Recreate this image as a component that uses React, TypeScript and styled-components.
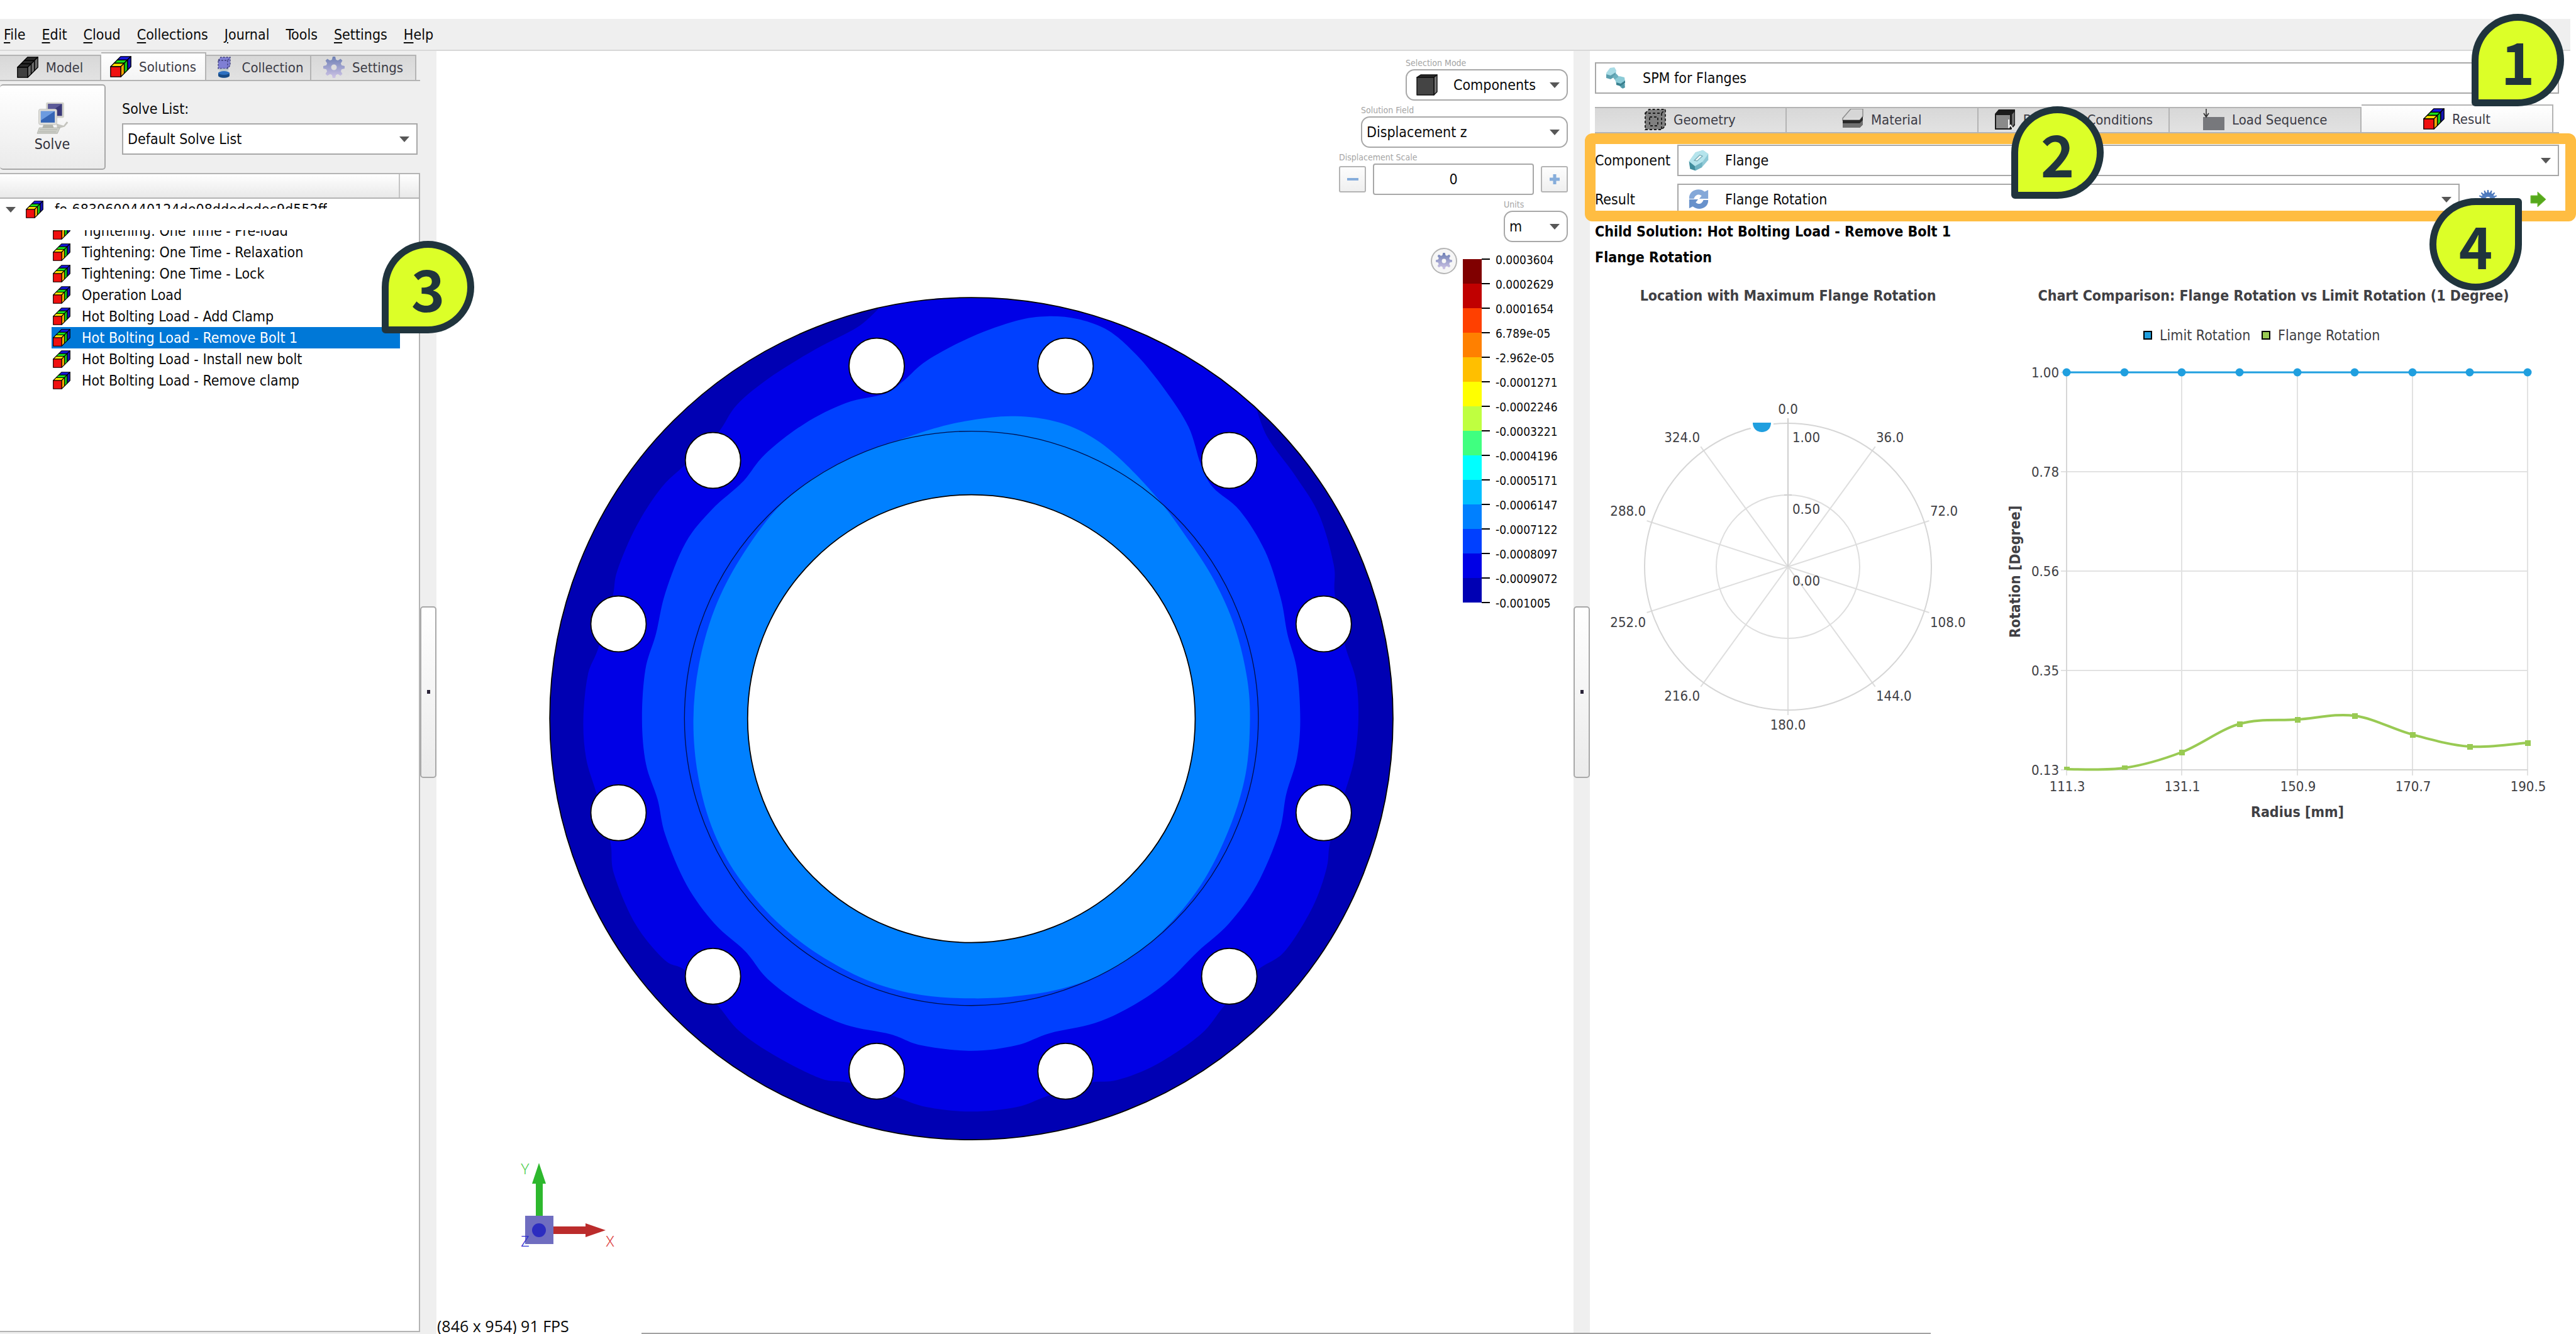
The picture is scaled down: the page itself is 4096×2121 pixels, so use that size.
import React from "react";
import type { ReactNode } from "react";
import styled, { createGlobalStyle, css } from "styled-components";

const uiFont = '"DejaVu Sans Condensed", "DejaVu Sans", "Noto Sans", sans-serif';
const line = "#a8a8a8";
const panel = "#efefef";

const GlobalStyle = createGlobalStyle`
  *, *::before, *::after { box-sizing: border-box; }
  body { margin: 0; background: #fff; }
  body, button, input, select { font-family: ${uiFont}; font-size: 23px; color: #0a0a0a; }
  h1, h2, ul, ol, p { margin: 0; padding: 0; font-size: inherit; }
  ul, ol { list-style: none; }
  svg { display: block; flex: none; }
`;

/* ---------- page frame ---------- */

const Page = styled.div`
  position: relative;
  display: flex;
  flex-direction: column;
  min-height: 100vh;
  padding-top: 30px;
  overflow: hidden;
`;

const MenuBar = styled.nav`
  display: flex;
  align-items: center;
  gap: 26px;
  height: 51px;
  margin-right: 9px;
  padding-left: 6px;
  background: ${panel};
  border-bottom: 2px solid #d8d8d8;
`;

const MenuItem = styled.button`
  padding: 0;
  border: 0;
  background: none;
  line-height: 30px;
  u { text-decoration-thickness: 2px; text-underline-offset: 4px; }
`;

const Workspace = styled.main`
  flex: 1;
  display: grid;
  grid-template-columns: 668px 26px minmax(0, 1808fr) 26px minmax(0, 1568fr);
`;

const Splitter = styled.div`
  display: flex;
  flex-direction: column;
  justify-content: center;
  padding-bottom: 2px;
  background: ${panel};
`;

const SplitHandle = styled.button`
  display: grid;
  place-items: center;
  height: 273px;
  padding: 0;
  border: 2px solid ${line};
  border-radius: 5px;
  background: linear-gradient(#fff, #ebebeb);
  &::after { content: ""; width: 5px; height: 6px; background: #2a2438; }
`;

/* ---------- shared controls ---------- */

const Tabs = styled.div<{ $inset: number }>`
  display: flex;
  align-items: flex-end;
  padding-right: ${(p) => p.$inset}px;
  border-bottom: 2px solid #b4b4b4;
`;

const Tab = styled.button<{ $active?: boolean; $basis?: number }>`
  flex: ${(p) => p.$basis ?? 1} 1 0;
  min-width: 0;
  display: flex;
  align-items: center;
  justify-content: center;
  gap: 12px;
  height: 40px;
  padding: 0 0 2px;
  border: 0 solid #b4b4b4;
  border-width: 2px 2px 0 0;
  background: linear-gradient(#d8d8d8, #e2e2e2);
  color: #3c3c46;
  font-size: 22px;
  white-space: nowrap;
  ${(p) => p.$active && css`
    height: 44px;
    padding: 0;
    background: linear-gradient(#fff, #f4f4f4);
  `}
`;

const SelectFrame = styled.span<{ $round?: boolean; $width?: number }>`
  display: flex;
  align-items: center;
  height: 50px;
  width: ${(p) => (p.$width ? `${p.$width}px` : "auto")};
  flex: ${(p) => (p.$width ? "none" : 1)};
  padding: 0 11px 0 7px;
  border: 2px solid ${line};
  border-radius: ${(p) => (p.$round ? 14 : 0)}px;
  background: #fff;
`;

const SelectIcon = styled.span`
  margin: 0 25px 0 8px;
`;

const NativeSelect = styled.select`
  flex: 1;
  min-width: 0;
  height: 100%;
  padding: 0;
  border: 0;
  background: none;
  appearance: none;
  outline: 0;
`;

const Caret = () => (
  <svg width="16" height="9" viewBox="0 0 16 9"><path d="M0 0H16L8 9Z" fill="#575757" /></svg>
);

function Select(props: { id: string; value: string; icon?: ReactNode; round?: boolean; width?: number }) {
  return (
    <SelectFrame $round={props.round} $width={props.width}>
      {props.icon && <SelectIcon>{props.icon}</SelectIcon>}
      <NativeSelect id={props.id} defaultValue={props.value}>
        <option>{props.value}</option>
      </NativeSelect>
      <Caret />
    </SelectFrame>
  );
}

/* ---------- icons ---------- */

type Seg = [number, number, string, string];

function BlockStack({ size = 34, front, segs }: { size?: number; front: string; segs: Seg[] }) {
  return (
    <svg width={size} height={size} viewBox="0 0 42 42" stroke="#000" strokeWidth="1.6" strokeLinejoin="round">
      {segs.map(([a, b, top, side]) => {
        const p = (x: number, y: number, t: number) => `${x + 20 * t},${y - 20 * t}`;
        return (
          <g key={a}>
            <polygon fill={top} points={[p(1, 21, a), p(21, 21, a), p(21, 21, b), p(1, 21, b)].join(" ")} />
            <polygon fill={side} points={[p(21, 21, a), p(21, 41, a), p(21, 41, b), p(21, 21, b)].join(" ")} />
          </g>
        );
      })}
      <rect x="1" y="21" width="20" height="20" fill={front} />
    </svg>
  );
}

const ResultIcon = ({ size }: { size?: number }) => (
  <BlockStack size={size} front="#f01010" segs={[
    [0.66, 1, "#1616e0", "#1414b8"],
    [0.34, 0.66, "#18e018", "#14c814"],
    [0, 0.34, "#ffe000", "#ffa800"],
  ]} />
);

const ModelIcon = () => (
  <BlockStack front="#404040" segs={[
    [0.66, 1, "#2a2a2a", "#6a6a6a"],
    [0.34, 0.66, "#2a2a2a", "#6a6a6a"],
    [0, 0.34, "#2a2a2a", "#6a6a6a"],
  ]} />
);

const CollectionIcon = () => (
  <svg width="34" height="34" viewBox="0 0 34 34">
    <path d="M8 6L12 1H27V14L23 19H8Z" fill="#7f7fd4" stroke="#3d3d78" strokeWidth="1.3" strokeDasharray="3 2" />
    <path d="M8 6H23V19M23 6L27 1" fill="none" stroke="#3d3d78" strokeWidth="1.3" strokeDasharray="3 2" />
    <ellipse cx="17" cy="21" rx="8" ry="2" fill="#b9c6c9" />
    <path d="M8 26V30C8 35 26 35 26 30V26Z" fill="#174a86" />
    <ellipse cx="17" cy="26" rx="9" ry="3" fill="#2c6fc0" />
  </svg>
);

type GearProps = { size?: number; from?: string; to?: string; teeth?: number; id: string };
function GearIcon({ size = 34, from = "#6d7fb4", to = "#cfc4e6", teeth = 8, id }: GearProps) {
  const half = 16 / teeth;
  return (
    <svg width={size} height={size} viewBox="0 0 34 34">
      <linearGradient id={id} gradientUnits="userSpaceOnUse" x1="0" y1="0" x2="0" y2="34">
        <stop offset="0" stopColor={from} /><stop offset="1" stopColor={to} />
      </linearGradient>
      <mask id={`${id}-teeth`}>
        {Array.from({ length: teeth }, (_, i) => (
          <path key={i} d={`M${17 - 2 * half} 8L${17 - half} 0H${17 + half}L${17 + 2 * half} 8Z`} fill="#fff" transform={`rotate(${(i * 360) / teeth} 17 17)`} />
        ))}
        <circle cx="17" cy="17" r="8.5" fill="none" stroke="#fff" strokeWidth="8" />
      </mask>
      <rect width="34" height="34" fill={`url(#${id})`} mask={`url(#${id}-teeth)`} />
    </svg>
  );
}

const SolveIcon = () => (
  <svg width="50" height="51" viewBox="0 0 60 62">
    <rect x="18" y="1" width="35" height="30" rx="3" fill="#d3d3cc" />
    <rect x="22" y="4" width="27" height="23" fill="#3a3878" />
    <path d="M22 4H49L22 22Z" fill="#5c5a98" />
    <path d="M38 42L52 46L58 38L61 40L54 48L40 52Z" fill="#c4c4be" />
    <rect x="4" y="14" width="35" height="30" rx="3" fill="#dededa" stroke="#bdbdb8" />
    <rect x="8" y="18" width="27" height="22" fill="#3565b5" />
    <path d="M8 18H35L8 36Z" fill="#6c9be0" />
    <path d="M13 44H31L33 50H11Z" fill="#b3b5ad" />
    <path d="M5 50H45L40 61H1Z" fill="#cfd1ca" stroke="#a9aba4" />
    <path d="M6 54H40M4 58H38" stroke="#b4b6ae" strokeWidth="1.5" />
  </svg>
);

const BoltIcon = () => (
  <svg width="34" height="34" viewBox="0 0 34 34">
    <path d="M1 9L7 1L14 0L17 5L16 13L8 18L1 16Z" fill="#a9dce6" />
    <path d="M1 11L8 13L16 8V14L8 19L1 17Z" fill="#5b9fae" />
    <path d="M11 15L17 10L31 27L29 33L25 33Z" fill="#6cb0be" />
    <path d="M15 19L22 14L30 16L31 23L24 28L17 26Z" fill="#8ccbd7" />
    <path d="M17 24L24 26L31 21V25L24 30L17 28Z" fill="#39808f" />
    <path d="M24 29L30 27L31 32L27 34Z" fill="#4f97a6" />
  </svg>
);

const NutIcon = () => (
  <svg width="34" height="34" viewBox="0 0 40 40">
    <path d="M2 22L14 5L28 1L38 8L38 19L26 33L14 39L4 36Z" fill="#8fc9d6" />
    <path d="M2 22L14 5L28 1L38 8L27 23L13 31Z" fill="#b5e4ec" />
    <path d="M2 22L13 31L14 39L4 36Z" fill="#3f8c9c" />
    <path d="M13 31L27 23L26 33L14 39Z" fill="#6fb3c2" />
    <path d="M12 20L22 10L27 12L17 21Z" fill="#f5fbfc" stroke="#74a9b4" strokeWidth="1.5" />
  </svg>
);

const RotationIcon = () => (
  <svg width="34" height="34" viewBox="0 0 36 36">
    <path d="M2 17C1 3 18 -3 28 5L34 2V17H19L23 12C18 8 12 10 10 17Z" fill="#84a8d8" />
    <path d="M34 19C35 33 18 38 8 30L2 33V18H17L13 23C18 28 24 25 26 19Z" fill="#6791cb" />
  </svg>
);

const CubeIcon = () => (
  <svg width="34" height="34" viewBox="0 0 34 34" stroke="#0c0c0c" strokeWidth="1.4" strokeLinejoin="round">
    <path d="M1 5L7 1H33L28 5Z" fill="#2b2b2b" />
    <path d="M28 5L33 1V28L28 33Z" fill="#777" />
    <path d="M1 5H28V33H1Z" fill="#444" />
  </svg>
);

const GeometryIcon = () => (
  <svg width="34" height="34" viewBox="0 0 34 34">
    <path d="M1 7L7 1H33V27L27 33H1Z" fill="#808080" />
    <path d="M1 7L7 1H33V27L27 33H1V7H27V33M27 7L33 1M8 13H21V27H8Z" fill="none" stroke="#1c1c1c" strokeWidth="1.8" strokeDasharray="4 3" />
  </svg>
);

const MaterialIcon = () => (
  <svg width="34" height="34" viewBox="0 0 34 34">
    <path d="M1 15L14 0H33L32 14Z" fill="#d6d6d6" />
    <path d="M1 15L14 0H33V12L28 18H1Z" fill="none" stroke="#8c8c8c" strokeWidth="1.5" />
    <path d="M1 18H28L33 12V25L28 30H1Z" fill="#2a2a2a" />
    <path d="M1 23H28L33 18V25L28 30H1Z" fill="#707070" />
  </svg>
);

const BoundaryIcon = () => (
  <svg width="34" height="34" viewBox="0 0 34 34">
    <path d="M1 8L7 1H33V26L27 33H1Z" fill="#1b1b1b" />
    <path d="M3 10H25V31H3Z" fill="#8a8a8a" />
    <path d="M28 9L32 5V24L28 29Z" fill="#6b6b6b" />
    <path d="M23 17V29L26 26L30 32" fill="none" stroke="#f2f2f2" strokeWidth="2" />
  </svg>
);

const LoadIcon = () => (
  <svg width="34" height="34" viewBox="0 0 34 34">
    <path d="M0 13H34V34H0Z" fill="#77787c" />
    <path d="M5 0V11M1 7L5 13L9 7" fill="none" stroke="#2e2e2e" strokeWidth="1.6" />
  </svg>
);

const GoIcon = () => (
  <svg width="26" height="26" viewBox="0 0 26 26">
    <path d="M1 7H12V1L25 13L12 25V19H1Z" fill="#55a81b" stroke="#7cc142" strokeWidth="1" />
  </svg>
);

const badgeCorners = {
  bl: "50% 50% 50% 6px",
  tr: "50% 6px 50% 50%",
};
const Badge = styled.span<{ $corner?: "bl" | "tr"; $top: number; $left?: number; $right?: number }>`
  position: absolute;
  z-index: 3;
  top: ${(p) => p.$top}px;
  ${(p) => (p.$left !== undefined ? `left: ${p.$left}px;` : `right: ${p.$right}px;`)}
  display: grid;
  place-items: center;
  width: 147px;
  height: 147px;
  border: 11px solid #20343d;
  border-radius: ${(p) => badgeCorners[p.$corner ?? "bl"]};
  background: #dcff28;
  color: #20343d;
  font: 700 91px/125px "Noto Sans CJK SC", "Noto Sans", sans-serif;
`;

/* ---------- left dock ---------- */

const LeftDock = styled.aside`
  position: relative;
  display: flex;
  flex-direction: column;
  padding: 2px 0 3px;
  background: ${panel};
`;

const SolveArea = styled.section`
  display: flex;
  gap: 26px;
  padding: 5px 4px 5px 0;
`;

const SolveButton = styled.button`
  display: flex;
  flex-direction: column;
  align-items: center;
  justify-content: center;
  gap: 2px;
  width: 168px;
  height: 136px;
  padding: 0;
  border: 2px solid ${line};
  border-left-width: 0;
  border-radius: 5px;
  background: linear-gradient(#fff, #ebebeb);
  color: #33333d;
  line-height: 28px;
`;

const SolveField = styled.div`
  flex: 1;
  display: flex;
  flex-direction: column;
  gap: 9px;
  padding-top: 25px;
  line-height: 28px;
  ${SelectFrame} { flex: none; }
`;

const TreeHeader = styled.div`
  height: 41px;
  padding-right: 30px;
  border: 2px solid #b4b4b4;
  border-left: 0;
  background: linear-gradient(#fff, #e9e9e9);
  &::after { content: ""; display: block; height: 100%; border-right: 2px solid #c4c4c4; }
`;

const Tree = styled.ul`
  flex: 1;
  padding-right: 30px;
  border: 0 solid #b4b4b4;
  border-width: 0 2px 2px 0;
  background: #fff;
  line-height: 34px;
  white-space: nowrap;
`;

const RootRow = styled.li`
  display: flex;
  align-items: center;
  height: 34px;
  padding-left: 9px;
`;

const RootIcon = styled.span`
  margin: 0 18px 0 16px;
`;

const RootLabel = styled.span`
  align-self: flex-start;
  height: 16px;
  overflow: hidden;
`;

const ChildRow = styled.li<{ $selected?: boolean; $cut?: boolean }>`
  display: flex;
  align-items: center;
  gap: 18px;
  height: 34px;
  margin-left: 82px;
  padding-left: 2px;
  ${(p) => p.$selected && css`background: #0078d7; color: #fff;`}
  ${(p) => p.$cut && css`
    height: 18px;
    margin-top: 16px;
    align-items: flex-end;
    overflow: hidden;
    svg { margin-bottom: 3px; }
  `}
`;

/* ---------- 3D view ---------- */

const View = styled.section`
  position: relative;
  display: flex;
  justify-content: flex-end;
  align-items: flex-start;
  background: #fff;
`;

const Scene = styled.svg`
  position: absolute;
  inset: 0;
  width: 100%;
  height: 100%;
`;

const FrameRate = styled.p`
  position: absolute;
  left: 1px;
  bottom: 0;
  font: 25px/26px "Open Sans", "Noto Sans", sans-serif;
`;

const ViewControls = styled.div`
  position: relative;
  display: flex;
  flex-direction: column;
  align-items: flex-end;
  gap: 5px;
  padding: 9px 9px 0 0;
`;

const ViewField = styled.div`
  display: flex;
  flex-direction: column;
  align-items: flex-start;
  & > label { color: #a4a4a4; font-size: 14px; line-height: 20px; }
`;

const Stepper = styled.div`
  display: flex;
  align-items: center;
  gap: 11px;
`;

const StepButton = styled.button`
  display: grid;
  place-items: center;
  width: 43px;
  height: 42px;
  padding: 0;
  border: 2px solid #b4b4b4;
  border-radius: 3px;
  background: linear-gradient(#fdfdfd, #efefef);
`;

const StepInput = styled.input`
  width: 256px;
  height: 50px;
  border: 2px solid ${line};
  border-radius: 4px;
  text-align: center;
`;

const Legend = styled.div`
  display: flex;
  align-items: flex-start;
  gap: 9px;
  padding-top: 4px;
`;

const RoundButton = styled.button`
  display: grid;
  place-items: center;
  width: 42px;
  height: 42px;
  padding: 0;
  border: 2px solid #b4b4b4;
  border-radius: 50%;
  background: #f6f6f6;
`;

const LegendBar = styled.svg`
  margin-top: 16px;
`;

const LegendLabels = styled.ol`
  width: 115px;
  font-size: 19px;
  line-height: 39px;
`;

const legendColors = ["#800000", "#c00000", "#ff4000", "#ff8000", "#ffbf00", "#ffff00", "#bfff40",
  "#40ff80", "#00ffff", "#00bfff", "#0080ff", "#0040ff", "#0000e6", "#0000b3"];
const legendValues = ["0.0003604", "0.0002629", "0.0001654", "6.789e-05", "-2.962e-05", "-0.0001271",
  "-0.0002246", "-0.0003221", "-0.0004196", "-0.0005171", "-0.0006147", "-0.0007122", "-0.0008097",
  "-0.0009072", "-0.001005"];

type Pt = [number, number];

/* Catmull-Rom spline through the points, as cubic Bézier segments. */
function spline(pts: Pt[], closed = false) {
  const n = pts.length;
  const at = (i: number) => (closed ? pts[(i + n) % n] : pts[Math.max(0, Math.min(n - 1, i))]);
  let d = `M${pts[0]}`;
  for (let i = 0; i < (closed ? n : n - 1); i++) {
    const [a, b, c, e] = [at(i - 1), at(i), at(i + 1), at(i + 2)];
    d += `C${b[0] + (c[0] - a[0]) / 6},${b[1] + (c[1] - a[1]) / 6} ${c[0] - (e[0] - b[0]) / 6},${c[1] - (e[1] - b[1]) / 6} ${c[0]},${c[1]}`;
  }
  return d;
}

const outerBand: Pt[] = [[612, 38], [575, 70], [500, 110], [420, 160], [360, 210], [325, 262], [268, 318], [225, 360],
  [180, 430], [146, 510], [137, 560], [112, 650], [93, 700], [85, 780], [90, 850], [108, 912], [133, 1000],
  [140, 1060], [178, 1150], [230, 1215], [268, 1235], [325, 1297], [365, 1345], [430, 1390], [510, 1430],
  [562, 1438], [640, 1462], [700, 1482], [780, 1490], [860, 1482], [915, 1462], [990, 1438], [1040, 1433],
  [1110, 1405], [1190, 1350], [1233, 1297], [1290, 1235], [1340, 1200], [1390, 1120], [1415, 1050], [1422, 1000],
  [1448, 912], [1465, 850], [1472, 780], [1468, 710], [1448, 645], [1430, 555], [1428, 500], [1402, 410],
  [1360, 340], [1310, 270], [1288, 212]];
const middleBand: Pt[] = [[915, 50], [970, 55], [1025, 76], [1075, 120], [1125, 182], [1168, 250], [1190, 318], [1212, 360],
  [1260, 402], [1305, 475], [1333, 560], [1345, 625], [1362, 690], [1368, 780], [1362, 850], [1343, 915],
  [1330, 985], [1290, 1080], [1240, 1150], [1185, 1200], [1130, 1255], [1070, 1297], [1000, 1330], [920, 1348],
  [860, 1370], [780, 1380], [690, 1370], [635, 1350], [555, 1333], [480, 1298], [415, 1250], [375, 1200],
  [320, 1150], [270, 1080], [232, 990], [218, 925], [197, 860], [190, 780], [196, 690], [215, 625], [232, 550],
  [268, 460], [315, 400], [370, 350], [410, 300], [480, 245], [555, 207], [625, 190], [660, 165], [700, 130],
  [780, 87], [860, 58]];
const innerBand: Pt[] = [[850, 231], [920, 238], [980, 260], [1040, 303], [1113, 380], [1170, 458], [1215, 530],
  [1250, 610], [1272, 700], [1278, 780], [1270, 880], [1240, 980], [1190, 1080], [1120, 1165], [1040, 1227],
  [950, 1265], [860, 1281], [780, 1285], [690, 1279], [600, 1255], [510, 1208], [430, 1145], [360, 1062],
  [315, 975], [290, 880], [282, 780], [292, 680], [320, 580], [365, 490], [430, 400], [500, 341], [580, 299],
  [658, 271], [720, 251], [780, 238]];
const boltHoles: Pt[] = [[610, 140], [948, 140], [317, 311], [1241, 311], [148, 607], [1410, 607], [148, 949],
  [1410, 949], [317, 1245], [1241, 1245], [610, 1417], [948, 1417]];

const FlangeModel = () => (
  <g transform="translate(158 378) scale(.8885 .8781)" stroke="#000">
    <clipPath id="flange-rim"><ellipse cx="779.5" cy="778.5" rx="754.5" ry="762.5" /></clipPath>
    <g clipPath="url(#flange-rim)" stroke="none">
      <rect width="1568" height="1568" fill="#0000b3" />
      <path d={`${spline(outerBand)}L1320,100L900,-60L612,-40Z`} fill="#0000e6" />
      <path d={spline(middleBand, true)} fill="#0040ff" />
      <path d={spline(innerBand, true)} fill="#0080ff" />
    </g>
    <ellipse cx="779.5" cy="778.5" rx="754.5" ry="762.5" fill="none" strokeWidth="2" />
    <ellipse cx="779.5" cy="778" rx="513.5" ry="520" fill="none" strokeWidth="1.5" stroke="#001050" />
    <ellipse cx="779.5" cy="778.5" rx="400.5" ry="405.5" fill="#fff" strokeWidth="2" />
    {boltHoles.map(([x, y]) => (
      <ellipse key={`${x}-${y}`} cx={x} cy={y} rx="49.5" ry="50.5" fill="#fff" strokeWidth="2" />
    ))}
  </g>
);

const AxisTriad = () => (
  <g fontFamily="Roboto, sans-serif" fontWeight="300" fontSize="23">
    <rect x="158" y="1799" width="11" height="60" fill="#2db82d" />
    <path d="M163 1768L174 1801H152Z" fill="#2db82d" />
    <rect x="180" y="1869" width="60" height="12" fill="#bb2c2c" />
    <path d="M269 1875L237 1886V1864Z" fill="#bb2c2c" />
    <rect x="141" y="1852" width="45" height="45" fill="#6f6dc0" />
    <circle cx="163" cy="1875" r="11" fill="#2c2cc0" />
    <text x="134" y="1786" fill="#50d050">Y</text>
    <text x="269" y="1901" fill="#dd4444">X</text>
    <text x="134" y="1901" fill="#3030d0">Z</text>
  </g>
);

/* ---------- right dock ---------- */

const RightDock = styled.aside`
  position: relative;
  display: flex;
  flex-direction: column;
  padding: 18px 27px 0 8px;
  background: #fff;
`;

const ToolRow = styled.div`
  display: flex;
  margin-bottom: 17px;
`;

const ResultForm = styled.form`
  position: relative;
  display: flex;
  flex-direction: column;
  gap: 12px;
  margin-top: 18px;
`;

const Highlight = styled.span`
  position: absolute;
  z-index: 2;
  inset: -18px -27px -10px -16px;
  border: 17px solid #ffbd42;
  border-radius: 12px;
  pointer-events: none;
`;

const FormRow = styled.div`
  display: flex;
  align-items: center;
  & > label { width: 131px; }
`;

const RowActions = styled.span`
  display: flex;
  gap: 14px;
  margin-left: 12px;
`;

const IconButton = styled.button`
  display: grid;
  place-items: center;
  width: 66px;
  height: 50px;
  padding: 0;
  border: 0;
  background: none;
`;

const Headline = styled.h2`
  font-weight: 700;
  line-height: 41px;
  color: #000;
`;

const Headlines = styled.header`
  padding: 6px 0 12px;
`;

const Charts = styled.div`
  display: grid;
  grid-template-columns: minmax(0, 627fr) minmax(0, 906fr);
  align-items: start;
`;

const ChartSvg = styled.svg`
  width: 100%;
  height: auto;
  font-family: ${uiFont};
  font-size: 23px;
  fill: #404044;
  .strong { font-weight: 700; }
  .polar { font-size: 22px; }
`;

const spokes = [0, 36, 72, 108, 144, 180, 216, 252, 288, 324];
const spokeLabels: [string, number, number, "start" | "middle" | "end"][] = [
  ["0.0", 307, 208, "middle"], ["36.0", 447, 253, "start"], ["72.0", 533, 370, "start"],
  ["108.0", 533, 547, "start"], ["144.0", 447, 664, "start"], ["180.0", 307, 710, "middle"],
  ["216.0", 167, 664, "end"], ["252.0", 81, 547, "end"], ["288.0", 81, 370, "end"], ["324.0", 167, 253, "end"],
];

const PolarChart = () => (
  <ChartSvg viewBox="0 0 627 740">
    <text className="strong" x="307" y="36" textAnchor="middle">Location with Maximum Flange Rotation</text>
    <g fill="none" stroke="#dedede" strokeWidth="2">
      <circle cx="307" cy="459" r="114" />
      {spokes.map((a) => (
        <path key={a} d="M307 459V223" transform={`rotate(${a} 307 459)`} />
      ))}
      <circle cx="307" cy="459" r="228" stroke="#d6d6d6" />
      <path d="M307 459V223M301 345H313" stroke="#cfcfcf" />
    </g>
    <circle cx="265" cy="231" r="19" fill="#fff" />
    <path d="M251 230C251 250 280 250 280 230Z" fill="#209fdf" />
    {spokeLabels.map(([t, x, y, anchor]) => (
      <text key={t} className="polar" x={x} y={y + 8} textAnchor={anchor}>{t}</text>
    ))}
    {["1.00", "0.50", "0.00"].map((t, i) => (
      <text key={t} className="polar" x="314" y={261 + i * 114}>{t}</text>
    ))}
  </ChartSvg>
);

const gridX = [123, 306, 490, 673, 856];
const gridY = [150, 308, 466, 624, 782];
const xLabels = ["111.3", "131.1", "150.9", "170.7", "190.5"];
const yLabels = ["1.00", "0.78", "0.56", "0.35", "0.13"];
const rotationY = [781, 779, 754, 709, 702, 696, 726, 745, 739];
const pointX = (i: number) => Math.round(123 + (i * 733) / 8);

const RotationChart = () => (
  <ChartSvg viewBox="0 0 906 880">
    <text className="strong" x="452" y="36" textAnchor="middle">
      Chart Comparison: Flange Rotation vs Limit Rotation (1 Degree)
    </text>
    <g stroke="#000" strokeWidth="2">
      <rect x="246" y="85" width="12" height="12" fill="#209fdf" />
      <rect x="434" y="85" width="12" height="12" fill="#99ca53" />
    </g>
    <text x="271" y="99">Limit Rotation</text>
    <text x="459" y="99">Flange Rotation</text>
    <g stroke="#e2e2e2" strokeWidth="2">
      {gridY.map((y) => <path key={y} d={`M114 ${y}H856`} />)}
      {gridX.map((x) => <path key={x} d={`M${x} 150V791`} />)}
      <path d="M123 150V782H856" fill="none" stroke="#d6d6d6" />
    </g>
    {gridY.map((y, i) => <text key={y} x="111" y={y + 8} textAnchor="end" className="polar">{yLabels[i]}</text>)}
    {gridX.map((x, i) => <text key={x} x={x + 1} y="816" textAnchor="middle" className="polar">{xLabels[i]}</text>)}
    <text className="strong" x="490" y="857" textAnchor="middle">Radius [mm]</text>
    <text className="strong" textAnchor="middle" transform="translate(49 467) rotate(-90)">Rotation [Degree]</text>
    <path d="M123 150H856" stroke="#209fdf" strokeWidth="3" />
    {rotationY.map((_, i) => <circle key={i} cx={pointX(i)} cy="150" r="6.5" fill="#209fdf" />)}
    <path d={spline(rotationY.map((y, i) => [pointX(i), y] as Pt))} fill="none" stroke="#99ca53" strokeWidth="4" />
    {rotationY.map((y, i) => <rect key={i} x={pointX(i) - 4} y={y - 4} width="9" height={Math.min(9, 786 - y)} fill="#99ca53" />)}
  </ChartSvg>
);

const StatusLine = styled.div`
  position: absolute;
  left: 1020px;
  right: 1026px;
  bottom: 0;
  height: 2px;
  background: #a2a2a2;
`;

/* ---------- application ---------- */

const menus = [["F", "ile"], ["E", "dit"], ["C", "loud"], ["C", "ollections"], ["J", "ournal"], ["", "Tools"], ["S", "ettings"], ["H", "elp"]];
const children = ["Tightening: One Time - Pre-load", "Tightening: One Time - Relaxation", "Tightening: One Time - Lock",
  "Operation Load", "Hot Bolting Load - Add Clamp", "Hot Bolting Load - Remove Bolt 1",
  "Hot Bolting Load - Install new bolt", "Hot Bolting Load - Remove clamp"];

export default function App() {
  return (
    <Page>
      <GlobalStyle />
      <MenuBar>
        {menus.map(([key, rest]) => (
          <MenuItem key={key + rest}>{key && <u>{key}</u>}{rest}</MenuItem>
        ))}
      </MenuBar>
      <Workspace>
        <LeftDock>
          <Tabs $inset={6}>
            <Tab $basis={161}><ModelIcon />Model</Tab>
            <Tab $basis={167} $active><ResultIcon />Solutions</Tab>
            <Tab $basis={167}><CollectionIcon />Collection</Tab>
            <Tab $basis={167}><GearIcon id="gear-tab" />Settings</Tab>
          </Tabs>
          <SolveArea>
            <SolveButton><SolveIcon />Solve</SolveButton>
            <SolveField>
              <label htmlFor="solve-list">Solve List:</label>
              <Select id="solve-list" value="Default Solve List" />
            </SolveField>
          </SolveArea>
          <TreeHeader />
          <Tree>
            <RootRow>
              <Caret />
              <RootIcon><ResultIcon size={28} /></RootIcon>
              <RootLabel>fe-6830600440124de08ddededec9d552ff</RootLabel>
            </RootRow>
            {children.map((name, i) => (
              <ChildRow key={name} $cut={i === 0} $selected={i === 5}>
                <ResultIcon size={28} />{name}
              </ChildRow>
            ))}
          </Tree>
          <Badge $top={302} $left={607}>3</Badge>
        </LeftDock>
        <Splitter><SplitHandle aria-label="Collapse left dock" /></Splitter>
        <View>
          <Scene viewBox="0 0 1808 2040" preserveAspectRatio="xMinYMax meet">
            <FlangeModel />
            <AxisTriad />
          </Scene>
          <ViewControls>
            <ViewField>
              <label htmlFor="selection-mode">Selection Mode</label>
              <Select id="selection-mode" value="Components" icon={<CubeIcon />} round width={258} />
            </ViewField>
            <ViewField>
              <label htmlFor="solution-field">Solution Field</label>
              <Select id="solution-field" value="Displacement z" round width={329} />
            </ViewField>
            <ViewField>
              <label htmlFor="scale">Displacement Scale</label>
              <Stepper>
                <StepButton aria-label="Decrease">
                  <svg width="20" height="20" viewBox="0 0 20 20"><path d="M1 10H19" stroke="#86addb" strokeWidth="4" /></svg>
                </StepButton>
                <StepInput id="scale" defaultValue="0" />
                <StepButton aria-label="Increase">
                  <svg width="20" height="20" viewBox="0 0 20 20"><path d="M2 10H18M10 2V18" stroke="#86addb" strokeWidth="5" /></svg>
                </StepButton>
              </Stepper>
            </ViewField>
            <ViewField>
              <label htmlFor="units">Units</label>
              <Select id="units" value="m" round width={102} />
            </ViewField>
            <Legend>
              <RoundButton aria-label="Legend settings"><GearIcon id="gear-legend" size={26} /></RoundButton>
              <LegendBar width="43" height="552" viewBox="0 0 43 552">
                {legendColors.map((c, i) => <rect key={c} y={2 + i * 39} width="30" height="39" fill={c} />)}
                {legendValues.map((v, i) => <path key={v} d={`M30 ${2 + i * 39}H43`} stroke="#000" strokeWidth="2" />)}
              </LegendBar>
              <LegendLabels>{legendValues.map((v) => <li key={v}>{v}</li>)}</LegendLabels>
            </Legend>
          </ViewControls>
          <FrameRate>(846 x 954) 91 FPS</FrameRate>
        </View>
        <Splitter><SplitHandle aria-label="Collapse right dock" /></Splitter>
        <RightDock>
          <ToolRow>
            <Select id="tool" value="SPM for Flanges" icon={<BoltIcon />} />
          </ToolRow>
          <Tabs $inset={9}>
            <Tab><GeometryIcon />Geometry</Tab>
            <Tab><MaterialIcon />Material</Tab>
            <Tab><BoundaryIcon />Boundary Conditions</Tab>
            <Tab><LoadIcon />Load Sequence</Tab>
            <Tab $active><ResultIcon />Result</Tab>
          </Tabs>
          <ResultForm onSubmit={(e) => e.preventDefault()}>
            <FormRow>
              <label htmlFor="component">Component</label>
              <Select id="component" value="Flange" icon={<NutIcon />} />
            </FormRow>
            <FormRow>
              <label htmlFor="result">Result</label>
              <Select id="result" value="Flange Rotation" icon={<RotationIcon />} />
              <RowActions>
                <IconButton aria-label="Configure"><GearIcon id="gear-row" size={30} from="#3e6cb4" to="#7ea6dc" teeth={16} /></IconButton>
                <IconButton aria-label="Go"><GoIcon /></IconButton>
              </RowActions>
            </FormRow>
            <Highlight />
          </ResultForm>
          <Headlines>
            <Headline>Child Solution: Hot Bolting Load - Remove Bolt 1</Headline>
            <Headline>Flange Rotation</Headline>
          </Headlines>
          <Charts>
            <PolarChart />
            <RotationChart />
          </Charts>
          <Badge $top={-59} $right={19}>1</Badge>
          <Badge $top={88} $right={751}>2</Badge>
          <Badge $corner="tr" $top={234} $right={86}>4</Badge>
        </RightDock>
      </Workspace>
      <StatusLine />
    </Page>
  );
}
